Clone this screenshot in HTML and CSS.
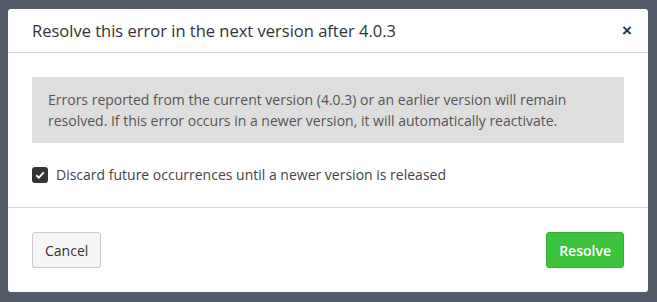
FILE: index.html
```html
<!DOCTYPE html>
<html lang="en">
<head>
<meta charset="UTF-8" />
<title>Resolve in next version</title>
<link rel="stylesheet" href="styles.css">
</head>
<body>
  <div class="backdrop">
    <div class="modal">
      <div class="modal-header">
        <h3>Resolve this error in the next version after 4.0.3</h3>
        <button type="button" class="close">&times;</button>
      </div>
      <div class="modal-body">
        <div class="info">
          Errors reported from the current version (4.0.3) or an earlier version will remain
          resolved. If this error occurs in a newer version, it will automatically reactivate.
        </div>
        <label class="check">
          <span class="box">
            <svg width="10" height="8" viewBox="0 0 10 8"><path d="M1.2 4.2 L3.8 6.6 L8.8 1.4" fill="none" stroke="#fff" stroke-width="1.9"/></svg>
          </span>
          Discard future occurrences until a newer version is released
        </label>
      </div>
      <div class="modal-footer">
        <button type="button" class="btn">Cancel</button>
        <button type="button" class="btn btn-success">Resolve</button>
      </div>
    </div>
  </div>
</body>
</html>
```
FILE: styles.css
```css
body {
  margin: 0;
  font-family: "Open Sans", Arial, sans-serif;
  background: #535a68;
}
.backdrop {
  height: 302px;
  padding: 9px 9px 0 8px;
  box-sizing: border-box;
}
.modal {
  width: 640px;
  height: 283px;
  background: #fff;
  border-radius: 3px;
  display: flex;
  flex-direction: column;
  color: #333;
}
.modal-header {
  height: 43px;
  display: flex;
  align-items: center;
  justify-content: space-between;
  padding: 0 16px 0 24px;
  border-bottom: 1px solid #d9d9d9;
}
.modal-header h3 {
  margin: 0;
  font-size: 16.5px;
  font-weight: 400;
  color: #333;
}
.close {
  border: none;
  background: none;
  font-size: 17px;
  font-weight: bold;
  color: #333;
  padding: 0;
  cursor: pointer;
  font-family: Arial, sans-serif;
}
.modal-body {
  padding: 24px;
  border-bottom: 1px solid #d9d9d9;
}
.info {
  background: #dedede;
  color: #555;
  font-size: 14px;
  line-height: 21px;
  padding: 12px 16px;
}
.check {
  display: flex;
  align-items: center;
  gap: 8px;
  margin-top: 24px;
  font-size: 14px;
  color: #444;
  line-height: 16px;
}
.box {
  width: 16px;
  height: 16px;
  background: #333;
  border-radius: 3px;
  display: flex;
  align-items: center;
  justify-content: center;
}
.modal-footer {
  flex: 1;
  display: flex;
  align-items: center;
  justify-content: space-between;
  padding: 0 24px;
}
.btn {
  height: 36px;
  padding: 0 12px;
  font-family: "Open Sans", Arial, sans-serif;
  font-size: 14px;
  color: #333;
  background: #f5f5f5;
  border: 1px solid #c8c8c8;
  border-radius: 3px;
  cursor: pointer;
}
.btn-success {
  background: #3cc43c;
  border-color: #36ad36;
  color: #fff;
  font-weight: 600;
}
```
